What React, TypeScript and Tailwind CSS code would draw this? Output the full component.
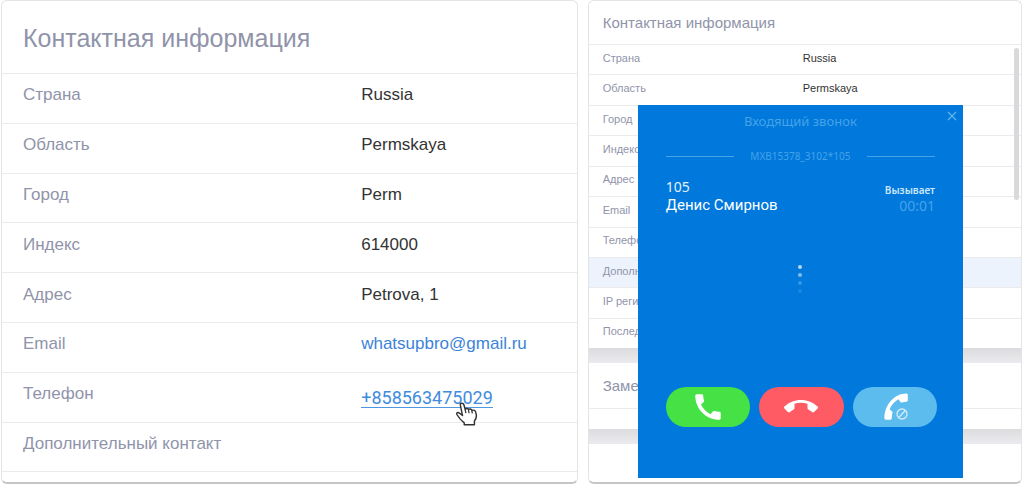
import React from "react";
import { MdCall, MdCallEnd } from "react-icons/md";

type Row = { label: string; value?: string; kind?: "email" | "phone" };

const contactRows: Row[] = [
	{ label: "Страна", value: "Russia" },
	{ label: "Область", value: "Permskaya" },
	{ label: "Город", value: "Perm" },
	{ label: "Индекс", value: "614000" },
	{ label: "Адрес", value: "Petrova, 1" },
	{ label: "Email", value: "whatsupbro@gmail.ru", kind: "email" },
	{ label: "Телефон", value: "+858563475029", kind: "phone" },
	{ label: "Дополнительный контакт" },
];

const crmRows: (Row & { active?: boolean })[] = [
	{ label: "Страна", value: "Russia" },
	{ label: "Область", value: "Permskaya" },
	{ label: "Город" },
	{ label: "Индекс" },
	{ label: "Адрес" },
	{ label: "Email" },
	{ label: "Телефон" },
	{ label: "Дополнительный контакт", active: true },
	{ label: "IP регистрации" },
	{ label: "Последний вход" },
];

function HandCursor() {
	return (
		<svg viewBox="0 0 22 24" className="absolute left-[94px] top-3.5 w-[23px] h-[25px]" aria-hidden>
			<path
				d="M5 2.6C5 .6 8 .6 8.500 2.600L9.700 7C10.400 5.800 12.400 6 12.900 7.300C14 6.200 15.800 6.700 16.200 8.100C17.700 7.300 19.700 8.200 19.900 10C20.900 13 20.600 16 18.600 18.300V21.800H8.800V20C6 17.800 3.500 15 1.800 12C1 10.300 2.800 9.400 4.200 10.700L7.200 13Z"
				fill="#fff"
				stroke="#333"
				strokeWidth="1.400"
				strokeLinejoin="round"
			/>
			<path d="M9.700 7.300L10.400 10.600M12.900 7.800L13.500 10.800M16.200 8.500L16.600 11" stroke="#333" strokeWidth="1.200" />
		</svg>
	);
}

function ContactValue({ row }: { row: Row }) {
	if (row.kind === "email") {
		return <a href="mailto:whatsupbro@gmail.ru" className="text-[#3c83d8]">{row.value}</a>;
	}
	if (row.kind === "phone") {
		return (
			<div className="relative w-fit">
				<a
					href="tel:+858563475029"
					className="block h-5 leading-5 text-lg border-b border-[#4f97e0] text-[#3f8cde] font-['Roboto',sans-serif]"
				>
					{row.value}
				</a>
				<HandCursor />
			</div>
		);
	}
	return <>{row.value}</>;
}

function ContactCard() {
	return (
		<section className="flex-[577_1_0%] overflow-hidden rounded-md border border-[#e4e4e6] border-b-2 border-b-[#c6c6c8] bg-white">
			<h2 className="flex h-[72px] items-center pl-[21px] pt-1 text-[25px] text-[#9094aa]">Контактная информация</h2>
			<table className="h-[398px] w-full table-fixed border-collapse text-[17px] leading-5">
				<tbody>
					{contactRows.map((row) => (
						<tr key={row.label} className="border-t border-[#ebebed]">
							<th scope="row" className="w-[62.5%] pb-1.5 pl-[21px] text-left font-normal text-[#9094aa]">
								{row.label}
							</th>
							<td className={row.kind === "phone" ? "pt-1 pb-0.5" : "pb-1.5 text-[#333]"}>
								<ContactValue row={row} />
							</td>
						</tr>
					))}
				</tbody>
			</table>
			<div className="h-[11px] border-t border-[#ebebed]" />
		</section>
	);
}

function DeclineIcon() {
	return (
		<svg viewBox="0 0 28 28" className="size-7" aria-hidden>
			{/* handset turned upwards */}
			<path
				transform="translate(-.5 31) scale(1.3 -1.45)"
				d="M20.01 15.38c-1.23 0-2.42-.2-3.53-.56a.977.977 0 0 0-1.01.24l-1.57 1.970c-2.830-1.350-5.480-3.900-6.890-6.830l1.950-1.660c.27-.28.35-.67.24-1.020-.37-1.110-.56-2.300-.56-3.530 0-.54-.45-.99-.99-.99H4.190C3.650 3 3 3.240 3 3.990 3 13.280 10.730 21 20.010 21c.71 0 .99-.63.99-1.180v-3.450c0-.54-.45-.99-.99-.99z"
				fill="#fff"
			/>
			<circle cx="21" cy="21" r="5" fill="none" stroke="#d4ecfa" strokeWidth="1.300" />
			<path d="M17.700 24.500L24.300 17.500" stroke="#d4ecfa" strokeWidth="1.300" />
		</svg>
	);
}

function CallDialog() {
	return (
		<div
			role="dialog"
			aria-label="Входящий звонок"
			className="absolute left-[49px] right-[58px] top-[104px] flex h-[373px] flex-col bg-[#0078dc] px-7 font-['Noto_Sans',sans-serif] text-[#45a3e8]"
		>
			<button type="button" aria-label="Закрыть" className="absolute right-1.5 top-1.5 flex size-2.5 items-center">
				<svg viewBox="0 0 10 10" className="size-2.5" aria-hidden>
					<path d="M1 1L9 9M9 1L1 9" stroke="#62b5ed" strokeWidth="1.200" />
				</svg>
			</button>
			<p className="mt-1.5 text-center text-[13px] leading-5">Входящий звонок</p>
			<div className="mt-[19px] flex items-center justify-between text-[10px] leading-3">
				<span className="h-px w-[68px] bg-[#45a3e8]" />
				<span>MXB15378_3102*105</span>
				<span className="h-px w-[68px] bg-[#45a3e8]" />
			</div>
			<div className="mt-4 flex items-start justify-between">
				<div>
					<p className="text-sm leading-[18px] text-[#e2f1fc]">105</p>
					<p className="text-[15px] leading-[18px] text-white font-['Roboto',sans-serif]">Денис Смирнов</p>
				</div>
				<div className="pt-1 text-right">
					<p className="text-[10px] font-semibold leading-4 text-[#cde6f9]">Вызывает</p>
					<p className="text-sm leading-4">00:01</p>
				</div>
			</div>
			<div className="mt-[51px] flex flex-col items-center gap-1">
				<span className="size-1 rounded-full bg-[#b3d9f7]" />
				<span className="size-1 rounded-full bg-[#80bff0]" />
				<span className="size-1 rounded-full bg-[#3597e5]" />
				<span className="size-1 rounded-full bg-[#1b88e1]" />
			</div>
			<div className="-mr-0.5 mb-[51px] mt-auto flex gap-[9px]">
				<button type="button" aria-label="Ответить" className="flex h-10 flex-1 items-center justify-center rounded-full bg-[#45e145]">
					<MdCall className="size-[34px] text-white" />
				</button>
				<button type="button" aria-label="Завершить" className="flex h-10 flex-1 items-center justify-center rounded-full bg-[#ff5b65]">
					<MdCallEnd className="size-[34px] text-white" />
				</button>
				<button type="button" aria-label="Отклонить" className="flex h-10 flex-1 items-center justify-center rounded-full bg-[#5dbcee]">
					<DeclineIcon />
				</button>
			</div>
		</div>
	);
}

function CrmCard() {
	return (
		<section className="relative flex-[434_1_0%] overflow-hidden rounded-md border border-[#e4e4e6] border-b-2 border-b-[#c6c6c8] bg-white">
			<h2 className="flex h-[43px] items-center pl-3.5 pt-0.5 text-[15px] text-[#9094aa]">Контактная информация</h2>
			<table className="h-[304px] w-full table-fixed border-collapse text-[11px] leading-4">
				<tbody>
					{crmRows.map((row) => (
						<tr key={row.label} className={`border-t border-[#ebebed] ${row.active ? "bg-[#edf3fc]" : ""}`}>
							<th scope="row" className="w-[49.5%] truncate pb-1 pl-3.5 text-left font-normal text-[#9094aa]">
								{row.label}
							</th>
							<td className="pb-1 text-[#333]">{row.value}</td>
						</tr>
					))}
				</tbody>
			</table>
			<div className="h-[15px] bg-linear-to-b from-[#dcdcdf] to-[#ebebef]" />
			<h2 className="flex h-[45px] items-center pl-3.5 pt-0.5 text-[15px] text-[#9094aa]">Заметки</h2>
			<div className="h-[21px] border-t border-[#ebebed]" />
			<div className="h-[15px] bg-linear-to-b from-[#dcdcdf] to-[#ebebef]" />
			<div className="absolute right-0.5 top-[47px] h-[152px] w-[5px] rounded-full bg-[#d9d9db]" />
			<CallDialog />
		</section>
	);
}

export default function App() {
	return (
		<main className="flex gap-2.5 bg-white pb-0.5 pl-px pr-0.5 font-['Liberation_Sans',Arial,sans-serif]">
			<ContactCard />
			<CrmCard />
		</main>
	);
}
